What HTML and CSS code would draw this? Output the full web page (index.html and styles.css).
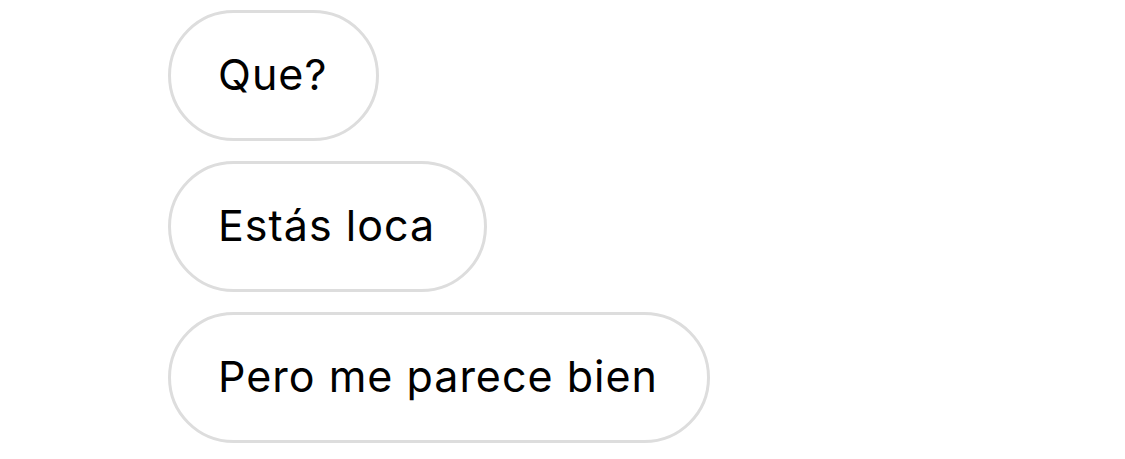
FILE: index.html
```html
<!DOCTYPE html>
<html lang="es">
<head>
    <meta charset="UTF-8">
    <meta name="viewport" content="width=device-width, initial-scale=1.0">
    <title>Mensajes</title>
    <link rel="stylesheet" href="styles.css">
</head>
<body>
    <div class="thread">
        <div class="bubble">Que?</div>
        <div class="bubble">Estás loca</div>
        <div class="bubble">Pero me parece bien</div>
    </div>
</body>
</html>
```

FILE: styles.css
```css
body {
    margin: 0;
    padding: 0;
    background-color: #fff;
    font-family: Inter, "Noto Sans", sans-serif;
    color: #000;
}

.thread {
    display: flex;
    flex-direction: column;
    align-items: flex-start;
    gap: 20px;
    padding: 10px 0 0 168px;
}

.bubble {
    box-sizing: border-box;
    height: 131px;
    padding: 0 49px 4px 47px;
    border: 3px solid #dddddd;
    border-radius: 66px;
    display: flex;
    align-items: center;
    font-size: 43px;
    letter-spacing: 1px;
}
```
